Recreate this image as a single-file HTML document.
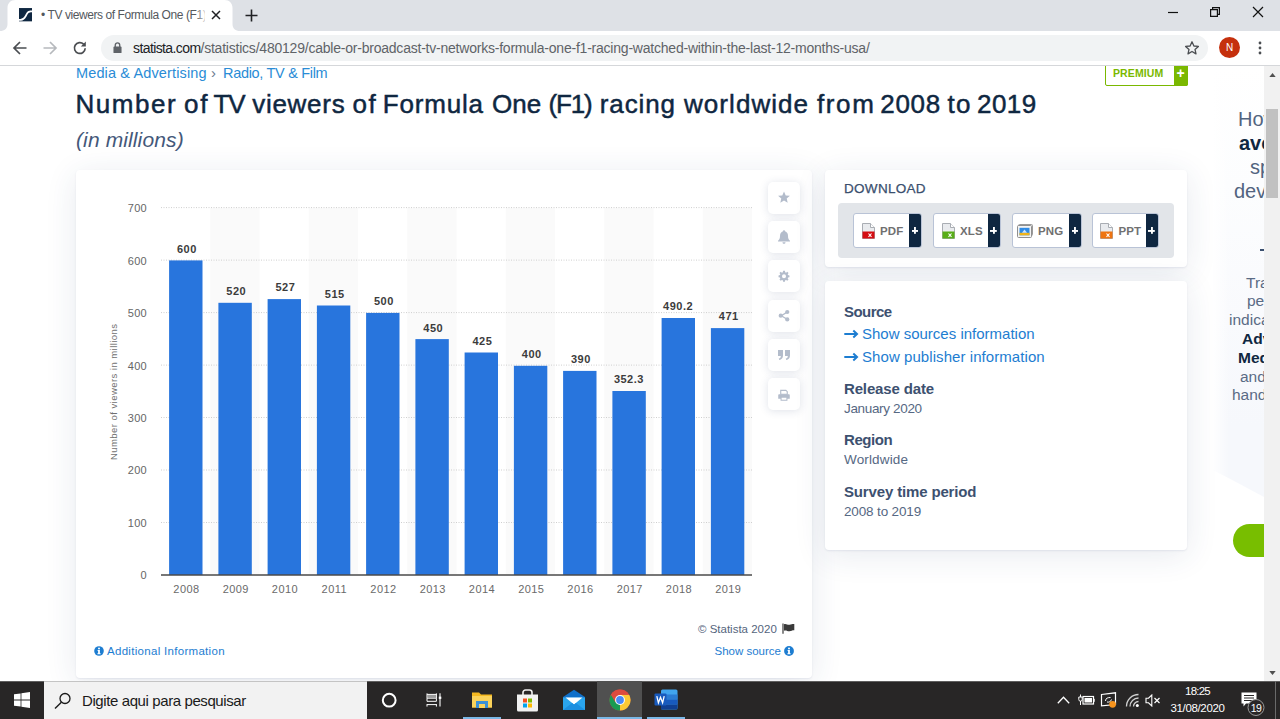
<!DOCTYPE html>
<html>
<head>
<meta charset="utf-8">
<title>TV viewers of Formula One (F1)</title>
<style>
*{box-sizing:border-box;margin:0;padding:0}
html,body{width:1280px;height:719px;overflow:hidden;background:#fff;font-family:"Liberation Sans",sans-serif;}
.abs{position:absolute}
#root{position:relative;width:1280px;height:719px;overflow:hidden;background:#fff}
/* browser chrome */
#tabstrip{left:0;top:0;width:1280px;height:31px;background:#dee1e6}
#tab{left:8px;top:0;width:224px;height:31px;background:#fff;border-radius:8px 8px 0 0}
#tabtitle{left:41px;top:8px;font-size:12px;color:#54585d;white-space:nowrap;letter-spacing:-0.42px;width:164px;overflow:hidden}
#toolbar{left:0;top:31px;width:1280px;height:34px;background:#fff}
#tbline{left:0;top:65px;width:1280px;height:1px;background:#d5d7da}
#omni{left:101px;top:35px;width:1107px;height:26px;border-radius:13px;background:#f1f3f4}
#url{left:133px;top:40px;font-size:14px;color:#5f6368;white-space:nowrap;letter-spacing:-0.22px}
#url b{font-weight:normal;color:#202124;letter-spacing:-0.6px}
/* page */
#page{left:0;top:0;width:1264px;height:681px;background:#fff;overflow:hidden}
.card{background:#fff;border-radius:4px;box-shadow:0 5px 32px rgba(40,60,110,0.11),0 1px 2px rgba(40,60,110,0.09)}
.sbtn{left:768px;width:32px;height:32px;background:#fff;border-radius:5px;box-shadow:0 1px 9px rgba(40,60,110,0.15)}
.dlb{top:213px;height:35px;background:#fff;border:1px solid #b9c3d6;border-radius:3px;overflow:hidden}
.dlb span{position:absolute;top:11px;font-size:11.5px;font-weight:bold;color:#707070;letter-spacing:0.1px}
.dlb i{position:absolute;right:-1px;top:-1px;width:13px;height:35px;background:#0f2741;border-radius:0 3px 3px 0}
.dlb b{position:absolute;right:2.6px;top:13.2px;width:6.6px;height:6.6px;font-size:0;background:linear-gradient(#fff,#fff) center/100% 1.9px no-repeat,linear-gradient(#fff,#fff) center/1.9px 100% no-repeat}
.lbl{left:844px;font-size:15px;font-weight:bold;color:#3d5170;white-space:nowrap;letter-spacing:-0.15px}
.lnk{left:862px;font-size:15px;color:#1d7dd1;white-space:nowrap}
.val{left:844px;font-size:13.5px;color:#566883;white-space:nowrap}
.sbig{font-size:20px;color:#52647f;white-space:nowrap}
.ssm{font-size:15.5px;color:#5a6b85;white-space:nowrap}
#h1 span{position:absolute;top:0}
/* taskbar */
#taskbar{left:0;top:681px;width:1280px;height:38px;background:#282626}
#search{left:44px;top:681px;width:323px;height:38px;background:#f2f2f2}
#searchtxt{left:82px;top:692px;font-size:15px;color:#1a1a1a;white-space:nowrap;letter-spacing:-0.4px}
</style>
</head>
<body>
<div id="root">

<!-- ===== PAGE ===== -->
<div id="page" class="abs">

<!-- breadcrumb -->
<div class="abs" id="bc1" style="left:76px;top:65px;font-size:14.5px;color:#2a8cd6;white-space:nowrap;letter-spacing:0.13px">Media &amp; Advertising</div>
<div class="abs" style="left:211px;top:64px;font-size:15px;color:#6a7a8f">›</div>
<div class="abs" id="bc2" style="left:223px;top:65px;font-size:14.5px;color:#2a8cd6;white-space:nowrap;letter-spacing:-0.31px">Radio, TV &amp; Film</div>
<!-- premium badge -->
<div class="abs" style="left:1105px;top:60px;width:83px;height:26px;background:#fff;border:1px solid #7ab800;border-radius:2px"></div>
<div class="abs" style="left:1113px;top:67px;font-size:10.5px;font-weight:bold;color:#7ab800;letter-spacing:0.1px">PREMIUM</div>
<div class="abs" style="left:1174px;top:60px;width:14px;height:26px;background:#7ab800;border-radius:0 2px 2px 0"></div>
<div class="abs" style="left:1176.5px;top:65px;font-size:14px;font-weight:bold;color:#fff;line-height:16px">+</div>
<!-- title -->
<div class="abs" id="h1" style="left:0;top:88.5px;width:1100px;height:32px;font-size:26px;color:#0f2741;white-space:nowrap;-webkit-text-stroke:0.48px #0f2741"><span style="left:75.4px;letter-spacing:1.56px">Number</span><span style="left:184.1px;letter-spacing:1.60px">of</span><span style="left:213.5px;letter-spacing:-1.20px">TV</span><span style="left:252.2px;letter-spacing:0.72px">viewers</span><span style="left:352.4px;letter-spacing:1.60px">of</span><span style="left:382.8px;letter-spacing:0.82px">Formula</span><span style="left:492.0px;letter-spacing:0.00px">One</span><span style="left:548.5px;letter-spacing:-1.20px">(F1)</span><span style="left:599.8px;letter-spacing:0.88px">racing</span><span style="left:684.0px;letter-spacing:1.06px">worldwide</span><span style="left:817.0px;letter-spacing:1.60px">from</span><span style="left:880.3px;letter-spacing:0.67px">2008</span><span style="left:947.4px;letter-spacing:1.50px">to</span><span style="left:977.0px;letter-spacing:0.43px">2019</span></div>
<div class="abs" id="h2" style="left:76px;top:127.5px;font-size:21px;font-style:italic;color:#44587a;white-space:nowrap;letter-spacing:0.12px">(in millions)</div>

<!-- chart card -->
<div class="abs card" style="left:76px;top:170px;width:736px;height:508px"></div>
<svg class="abs" style="left:0;top:0" width="1264" height="681" viewBox="0 0 1264 681" font-family="Liberation Sans, sans-serif">
<rect x="210.25" y="207.6" width="49.25" height="366.4" fill="#fafafa"/>
<rect x="308.75" y="207.6" width="49.25" height="366.4" fill="#fafafa"/>
<rect x="407.25" y="207.6" width="49.25" height="366.4" fill="#fafafa"/>
<rect x="505.75" y="207.6" width="49.25" height="366.4" fill="#fafafa"/>
<rect x="604.25" y="207.6" width="49.25" height="366.4" fill="#fafafa"/>
<rect x="702.75" y="207.6" width="49.25" height="366.4" fill="#fafafa"/>
<path d="M161.0 522.5 H752.0" stroke="#cfcfcf" stroke-width="1" stroke-dasharray="1,1.5"/>
<path d="M161.0 470.0 H752.0" stroke="#cfcfcf" stroke-width="1" stroke-dasharray="1,1.5"/>
<path d="M161.0 417.5 H752.0" stroke="#cfcfcf" stroke-width="1" stroke-dasharray="1,1.5"/>
<path d="M161.0 365.1 H752.0" stroke="#cfcfcf" stroke-width="1" stroke-dasharray="1,1.5"/>
<path d="M161.0 312.6 H752.0" stroke="#cfcfcf" stroke-width="1" stroke-dasharray="1,1.5"/>
<path d="M161.0 260.1 H752.0" stroke="#cfcfcf" stroke-width="1" stroke-dasharray="1,1.5"/>
<path d="M161.0 207.6 H752.0" stroke="#cfcfcf" stroke-width="1" stroke-dasharray="1,1.5"/>
<rect x="169.1" y="260.4" width="33.4" height="314.6" fill="#2875dd"/>
<text x="186.9" y="252.7" font-size="11" font-weight="bold" fill="#3c3c3c" text-anchor="middle" letter-spacing="0.5">600</text>
<text x="186.5" y="593.2" font-size="11" fill="#6a6a6a" text-anchor="middle" letter-spacing="0.45">2008</text>
<rect x="218.4" y="302.8" width="33.4" height="272.2" fill="#2875dd"/>
<text x="236.2" y="295.1" font-size="11" font-weight="bold" fill="#3c3c3c" text-anchor="middle" letter-spacing="0.5">520</text>
<text x="235.8" y="593.2" font-size="11" fill="#6a6a6a" text-anchor="middle" letter-spacing="0.45">2009</text>
<rect x="267.6" y="299.1" width="33.4" height="275.9" fill="#2875dd"/>
<text x="285.4" y="291.4" font-size="11" font-weight="bold" fill="#3c3c3c" text-anchor="middle" letter-spacing="0.5">527</text>
<text x="285.0" y="593.2" font-size="11" fill="#6a6a6a" text-anchor="middle" letter-spacing="0.45">2010</text>
<rect x="316.9" y="305.5" width="33.4" height="269.5" fill="#2875dd"/>
<text x="334.7" y="297.8" font-size="11" font-weight="bold" fill="#3c3c3c" text-anchor="middle" letter-spacing="0.5">515</text>
<text x="334.3" y="593.2" font-size="11" fill="#6a6a6a" text-anchor="middle" letter-spacing="0.45">2011</text>
<rect x="366.1" y="312.9" width="33.4" height="262.1" fill="#2875dd"/>
<text x="383.9" y="305.2" font-size="11" font-weight="bold" fill="#3c3c3c" text-anchor="middle" letter-spacing="0.5">500</text>
<text x="383.5" y="593.2" font-size="11" fill="#6a6a6a" text-anchor="middle" letter-spacing="0.45">2012</text>
<rect x="415.4" y="339.1" width="33.4" height="235.9" fill="#2875dd"/>
<text x="433.2" y="332.3" font-size="11" font-weight="bold" fill="#3c3c3c" text-anchor="middle" letter-spacing="0.5">450</text>
<text x="432.8" y="593.2" font-size="11" fill="#6a6a6a" text-anchor="middle" letter-spacing="0.45">2013</text>
<rect x="464.6" y="352.5" width="33.4" height="222.5" fill="#2875dd"/>
<text x="482.4" y="344.5" font-size="11" font-weight="bold" fill="#3c3c3c" text-anchor="middle" letter-spacing="0.5">425</text>
<text x="482.0" y="593.2" font-size="11" fill="#6a6a6a" text-anchor="middle" letter-spacing="0.45">2014</text>
<rect x="513.9" y="365.8" width="33.4" height="209.2" fill="#2875dd"/>
<text x="531.7" y="357.6" font-size="11" font-weight="bold" fill="#3c3c3c" text-anchor="middle" letter-spacing="0.5">400</text>
<text x="531.3" y="593.2" font-size="11" fill="#6a6a6a" text-anchor="middle" letter-spacing="0.45">2015</text>
<rect x="563.1" y="370.9" width="33.4" height="204.1" fill="#2875dd"/>
<text x="580.9" y="363.2" font-size="11" font-weight="bold" fill="#3c3c3c" text-anchor="middle" letter-spacing="0.5">390</text>
<text x="580.5" y="593.2" font-size="11" fill="#6a6a6a" text-anchor="middle" letter-spacing="0.45">2016</text>
<rect x="612.4" y="391.0" width="33.4" height="184.0" fill="#2875dd"/>
<text x="628.9" y="383.3" font-size="11" font-weight="bold" fill="#3c3c3c" text-anchor="middle" letter-spacing="0.5">352.3</text>
<text x="629.8" y="593.2" font-size="11" fill="#6a6a6a" text-anchor="middle" letter-spacing="0.45">2017</text>
<rect x="661.6" y="318.0" width="33.4" height="257.0" fill="#2875dd"/>
<text x="678.1" y="310.3" font-size="11" font-weight="bold" fill="#3c3c3c" text-anchor="middle" letter-spacing="0.5">490.2</text>
<text x="679.0" y="593.2" font-size="11" fill="#6a6a6a" text-anchor="middle" letter-spacing="0.45">2018</text>
<rect x="710.9" y="328.1" width="33.4" height="246.9" fill="#2875dd"/>
<text x="728.7" y="320.4" font-size="11" font-weight="bold" fill="#3c3c3c" text-anchor="middle" letter-spacing="0.5">471</text>
<text x="728.3" y="593.2" font-size="11" fill="#6a6a6a" text-anchor="middle" letter-spacing="0.45">2019</text>
<path d="M161.0 575.0 H752.0" stroke="#4a4a4a" stroke-width="1.6"/>
<text x="147" y="579.4" font-size="11" fill="#666" text-anchor="end" letter-spacing="0.3">0</text>
<text x="147" y="526.9" font-size="11" fill="#666" text-anchor="end" letter-spacing="0.3">100</text>
<text x="147" y="474.4" font-size="11" fill="#666" text-anchor="end" letter-spacing="0.3">200</text>
<text x="147" y="421.9" font-size="11" fill="#666" text-anchor="end" letter-spacing="0.3">300</text>
<text x="147" y="369.5" font-size="11" fill="#666" text-anchor="end" letter-spacing="0.3">400</text>
<text x="147" y="317.0" font-size="11" fill="#666" text-anchor="end" letter-spacing="0.3">500</text>
<text x="147" y="264.5" font-size="11" fill="#666" text-anchor="end" letter-spacing="0.3">600</text>
<text x="147" y="212.0" font-size="11" fill="#666" text-anchor="end" letter-spacing="0.3">700</text>
<text transform="translate(116.9,391.8) rotate(-90)" font-size="9.5" fill="#707070" text-anchor="middle" letter-spacing="0.45">Number of viewers in millions</text>
</svg>
<!-- side buttons -->
<div class="abs sbtn" style="top:182px"></div>
<svg class="abs" style="left:776px;top:189px" width="16" height="16" viewBox="0 0 16 16"><g transform="translate(0.80,1.10) scale(0.9)"><path d="M8 1.5 L9.9 5.9 L14.6 6.3 L11 9.4 L12.1 14 L8 11.5 L3.9 14 L5 9.4 L1.4 6.3 L6.1 5.9 Z" fill="#b3bccb"/></g></svg>
<div class="abs sbtn" style="top:221px"></div>
<svg class="abs" style="left:776px;top:229px" width="16" height="16" viewBox="0 0 16 16"><path d="M8 1.2 C8.6 1.2 9 1.6 9 2.2 C11 2.8 12 4.5 12 7 C12 9.5 12.8 10.8 14 11.8 L14 12.5 L2 12.5 L2 11.8 C3.2 10.8 4 9.5 4 7 C4 4.5 5 2.8 7 2.2 C7 1.6 7.4 1.2 8 1.2 Z M6.5 13.2 L9.5 13.2 C9.5 14.1 8.8 14.8 8 14.8 C7.2 14.8 6.5 14.1 6.5 13.2 Z" fill="#b3bccb"/></svg>
<div class="abs sbtn" style="top:260px"></div>
<svg class="abs" style="left:776px;top:268px" width="16" height="16" viewBox="0 0 16 16"><g transform="translate(1.28,1.58) scale(0.84)"><path d="M6.9 1.5 H9.1 L9.4 3.2 L10.5 3.7 L11.9 2.7 L13.4 4.2 L12.4 5.6 L12.8 6.6 L14.5 6.9 V9.1 L12.8 9.4 L12.4 10.5 L13.4 11.9 L11.9 13.4 L10.5 12.4 L9.4 12.8 L9.1 14.5 H6.9 L6.6 12.8 L5.5 12.4 L4.1 13.4 L2.6 11.9 L3.6 10.5 L3.2 9.4 L1.5 9.1 V6.9 L3.2 6.6 L3.6 5.6 L2.6 4.2 L4.1 2.7 L5.5 3.7 L6.6 3.2 Z M8 5.6 A2.4 2.4 0 1 0 8 10.4 A2.4 2.4 0 1 0 8 5.6 Z" fill="#b3bccb" fill-rule="evenodd"/></g></svg>
<div class="abs sbtn" style="top:300px"></div>
<svg class="abs" style="left:776px;top:308px" width="16" height="16" viewBox="0 0 16 16"><g transform="translate(0.96,0.66) scale(0.88)"><path d="M5 8 L11.5 4 M5 8 L11.5 12" stroke="#b3bccb" stroke-width="1.5" fill="none"/><circle cx="4.3" cy="8" r="2.4" fill="#b3bccb"/><circle cx="11.7" cy="3.8" r="2.4" fill="#b3bccb"/><circle cx="11.7" cy="12.2" r="2.4" fill="#b3bccb"/></g></svg>
<div class="abs sbtn" style="top:339px"></div>
<svg class="abs" style="left:776px;top:347px" width="16" height="16" viewBox="0 0 16 16"><path d="M2 3 H7 V8.5 C7 11 5.6 12.6 3.2 13 L2.8 11.6 C4.2 11.2 4.8 10.3 4.8 9 H2 Z M9 3 H14 V8.5 C14 11 12.6 12.6 10.2 13 L9.8 11.6 C11.2 11.2 11.8 10.3 11.8 9 H9 Z" fill="#b3bccb"/></svg>
<div class="abs sbtn" style="top:378px"></div>
<svg class="abs" style="left:776px;top:387.5px" width="16" height="16" viewBox="0 0 16 16"><g transform="translate(1.12,0.62) scale(0.86)"><path d="M4.2 2 H10.2 L11.8 3.6 V6.5 H4.2 Z" fill="none" stroke="#b3bccb" stroke-width="1.3"/><path d="M2.5 6.5 H13.5 C14.2 6.5 14.7 7 14.7 7.7 V11.8 H12 V14 H4 V11.8 H1.3 V7.7 C1.3 7 1.8 6.5 2.5 6.5 Z M5.2 10.6 V12.8 H10.8 V10.6 Z" fill="#b3bccb" fill-rule="evenodd"/></g></svg>
<!-- chart footer -->
<div class="abs" id="addinf" style="left:107px;top:645px;font-size:11.5px;color:#1d7dd1;white-space:nowrap;letter-spacing:0.3px">Additional Information</div>
<svg class="abs" style="left:94px;top:645.9px" width="10" height="10" viewBox="0 0 10 10"><circle cx="5" cy="5" r="4.8" fill="#1d7dd1"/><rect x="4.1" y="1.7" width="1.8" height="1.6" fill="#fff"/><path d="M3.6 4.1 H5.9 V7.3 H6.6 V8.2 H3.4 V7.3 H4.1 V5 H3.6 Z" fill="#fff"/></svg>
<div class="abs" id="cpy" style="left:698px;top:622.5px;font-size:11.5px;color:#55657d;white-space:nowrap">© Statista 2020</div>
<svg class="abs" style="left:782px;top:623px" width="13" height="11" viewBox="0 0 13 11"><path d="M1 0.5 V10.8" stroke="#3a3a3a" stroke-width="1.2"/><path d="M2 1.3 C4 0.3 5.5 2.2 7.5 1.8 C9.5 1.4 10.5 0.8 12.3 1 V7.3 C10.5 7.1 9.5 8 7.5 8.2 C5.5 8.4 4 6.8 2 7.8 Z" fill="#3a3a3a"/></svg>
<div class="abs" id="shsrc" style="left:714.5px;top:645.4px;font-size:11.5px;color:#1d7dd1;white-space:nowrap">Show source</div>
<svg class="abs" style="left:784.2px;top:646px" width="10" height="10" viewBox="0 0 10 10"><circle cx="5" cy="5" r="4.9" fill="#1d7dd1"/><rect x="4.1" y="1.7" width="1.8" height="1.6" fill="#fff"/><path d="M3.6 4.1 H5.9 V7.3 H6.6 V8.2 H3.4 V7.3 H4.1 V5 H3.6 Z" fill="#fff"/></svg>

<!-- download card -->
<div class="abs card" style="left:825px;top:170px;width:362px;height:97px"></div>
<div class="abs" style="left:844px;top:181px;font-size:13.5px;color:#3a4f6e;letter-spacing:0.3px;white-space:nowrap;-webkit-text-stroke:0.25px #3a4f6e">DOWNLOAD</div>
<div class="abs" style="left:838px;top:203px;width:336px;height:55px;background:#e2e5e9;border-radius:4px"></div>
<!-- dl buttons -->
<div class="abs dlb" style="left:853px;width:69px"><span style="left:26px">PDF</span><i></i><b>+</b></div>
<div class="abs dlb" style="left:933px;width:67.6px"><span style="left:26px">XLS</span><i></i><b>+</b></div>
<div class="abs dlb" style="left:1012px;width:70px"><span style="left:25px">PNG</span><i></i><b>+</b></div>
<div class="abs dlb" style="left:1091.5px;width:67px"><span style="left:26px">PPT</span><i></i><b>+</b></div>
<svg class="abs" style="left:862px;top:223px" width="13" height="16" viewBox="0 0 13 16"><path d="M0.5 0.5 H8.5 L12.5 4.5 V15.5 H0.5 Z" fill="#e9ebee" stroke="#a9adb3" stroke-width="1"/><path d="M8.5 0.5 V4.5 H12.5" fill="#fff" stroke="#a9adb3" stroke-width="1"/><rect x="0.5" y="8.5" width="12" height="7" fill="#d40d12"/><path d="M6.5 13.8 L9.5 10.5 M6.5 10.5 L9.5 13.8" stroke="#fff" stroke-width="1.1"/></svg>
<svg class="abs" style="left:942px;top:223px" width="13" height="16" viewBox="0 0 13 16"><path d="M0.5 0.5 H8.5 L12.5 4.5 V15.5 H0.5 Z" fill="#e9ebee" stroke="#a9adb3" stroke-width="1"/><path d="M8.5 0.5 V4.5 H12.5" fill="#fff" stroke="#a9adb3" stroke-width="1"/><rect x="0.5" y="8.5" width="12" height="7" fill="#58ad17"/><path d="M6.5 13.8 L9.5 10.5 M6.5 10.5 L9.5 13.8" stroke="#fff" stroke-width="1.1"/></svg>
<svg class="abs" style="left:1017px;top:224px" width="16" height="14" viewBox="0 0 16 14"><rect x="1.5" y="0.5" width="14" height="11" rx="1" fill="#ededed" stroke="#9a9a9a"/><rect x="0.5" y="1.5" width="14" height="12" rx="1" fill="#f4f4f4" stroke="#8f8f8f"/><rect x="2.5" y="3.8" width="10" height="7.5" fill="#2f8be6"/><rect x="2.5" y="8.8" width="10" height="2.5" fill="#f0b41a"/><path d="M5 8.8 L7.5 5.5 L10 8.8 Z" fill="#cfe5fb"/></svg>
<svg class="abs" style="left:1100px;top:223px" width="13" height="16" viewBox="0 0 13 16"><path d="M0.5 0.5 H8.5 L12.5 4.5 V15.5 H0.5 Z" fill="#e9ebee" stroke="#a9adb3" stroke-width="1"/><path d="M8.5 0.5 V4.5 H12.5" fill="#fff" stroke="#a9adb3" stroke-width="1"/><rect x="0.5" y="8.5" width="12" height="7" fill="#ee7411"/><path d="M6.5 13.8 L9.5 10.5 M6.5 10.5 L9.5 13.8" stroke="#fff" stroke-width="1.1"/></svg>
<!-- source card -->
<div class="abs card" style="left:825px;top:281px;width:362px;height:269px"></div>
<div class="abs lbl" style="top:303px;letter-spacing:-0.55px">Source</div>
<div class="abs lnk" style="top:325px">Show sources information</div>
<div class="abs lnk" style="top:348px;letter-spacing:0.07px">Show publisher information</div>
<svg class="abs" style="left:844px;top:329px" width="15" height="10" viewBox="0 0 15 10"><path d="M0.3 5 H12 M9.3 1.6 L13 5 L9.3 8.4" stroke="#1d7dd1" stroke-width="2" fill="none"/></svg>
<svg class="abs" style="left:844px;top:352px" width="15" height="10" viewBox="0 0 15 10"><path d="M0.3 5 H12 M9.3 1.6 L13 5 L9.3 8.4" stroke="#1d7dd1" stroke-width="2" fill="none"/></svg>
<div class="abs lbl" style="top:380px">Release date</div>
<div class="abs val" style="top:401px;letter-spacing:-0.34px">January 2020</div>
<div class="abs lbl" style="top:431px;letter-spacing:-0.45px">Region</div>
<div class="abs val" style="top:452px;letter-spacing:0.15px">Worldwide</div>
<div class="abs lbl" style="top:483px">Survey time period</div>
<div class="abs val" style="top:504px;letter-spacing:-0.15px">2008 to 2019</div>
<!-- sidebar -->

<div class="abs" style="left:1213px;top:66px;width:51px;height:431px;background:linear-gradient(90deg,rgba(255,255,255,0.9) 0,rgba(255,255,255,0) 16px),linear-gradient(180deg,#fff 0,#fcfdfe 120px,#f9fafd 250px,#f6f8fc 360px,#f6f8fc 431px);clip-path:polygon(0 0,100% 0,100% 100%,0 93.7%)"></div>
<div class="abs sbig" style="left:1238px;top:108px">How</div>
<div class="abs sbig" style="left:1239px;top:132px;font-weight:bold;color:#0f2741">ave</div>
<div class="abs sbig" style="left:1250px;top:156px">sp</div>
<div class="abs sbig" style="left:1234px;top:180px">dev</div>
<div class="abs" style="left:1260px;top:249px;width:4px;height:1.5px;background:#3a4f6e"></div>
<div class="abs ssm" style="left:1246px;top:274px">Tra</div>
<div class="abs ssm" style="left:1247px;top:292px">pe</div>
<div class="abs ssm" style="left:1229px;top:311px">indica</div>
<div class="abs ssm" style="left:1242px;top:330px;font-weight:bold;color:#0f2741">Adv</div>
<div class="abs ssm" style="left:1238px;top:349px;font-weight:bold;color:#0f2741">Med</div>
<div class="abs ssm" style="left:1240px;top:368px">and</div>
<div class="abs ssm" style="left:1232px;top:386px">hand</div>
<div class="abs" style="left:1233px;top:524px;width:60px;height:33px;border-radius:17px;background:#78be00"></div>



</div>

<!-- ===== TAB STRIP ===== -->
<div id="tabstrip" class="abs"></div>
<svg class="abs" style="left:0;top:0" width="248" height="31" viewBox="0 0 248 31"><path d="M0 31 C4.500 31 7.500 28.500 7.500 24 V8 C7.500 3.500 10.500 0 15.500 0 H224.500 C229.500 0 232.500 3.500 232.500 8 V24 C232.500 28.500 235.500 31 240 31 Z" fill="#fff"/></svg>
<svg class="abs" style="left:18.700px;top:8.200px" width="13.300" height="13.400" viewBox="0 0 14 14"><rect width="14" height="14" fill="#0f2741"/><path d="M0 11.5 C5 11.5 5.5 9 7 6.5 C8.5 4 9 2.5 14 2.5 L14 4.5 C10 4.5 9.8 5.5 8.4 7.8 C7 10.2 6 13.5 0 13.5 Z" fill="#fff"/></svg>
<div id="tabtitle" class="abs">• TV viewers of Formula One (F1) r</div>
<div class="abs" style="left:196px;top:6px;width:12px;height:18px;background:linear-gradient(90deg,rgba(255,255,255,0),#fff)"></div>
<svg class="abs" style="left:211px;top:10px" width="10" height="10" viewBox="0 0 10 10"><path d="M1 1 L9 9 M9 1 L1 9" stroke="#202124" stroke-width="1.5" fill="none"/></svg>
<svg class="abs" style="left:245px;top:9px" width="13" height="13" viewBox="0 0 13 13"><path d="M6.5 0.5 V12.5 M0.5 6.5 H12.5" stroke="#202124" stroke-width="1.6" fill="none"/></svg>
<!-- window controls -->
<svg class="abs" style="left:1167px;top:6px" width="12" height="12" viewBox="0 0 12 12"><path d="M1 6.5 H11" stroke="#111" stroke-width="1.2"/></svg>
<svg class="abs" style="left:1209px;top:6px" width="12" height="12" viewBox="0 0 12 12"><path d="M1.6 3.6 H8.4 V10.4 H1.6 Z M3.6 3.4 V1.6 H10.4 V8.4 H8.6" stroke="#111" stroke-width="1.2" fill="none"/></svg>
<svg class="abs" style="left:1252px;top:6px" width="12" height="12" viewBox="0 0 12 12"><path d="M1 1 L11 11 M11 1 L1 11" stroke="#111" stroke-width="1.2" fill="none"/></svg>

<!-- ===== TOOLBAR ===== -->
<div id="toolbar" class="abs"></div>
<div id="tbline" class="abs"></div>
<svg class="abs" style="left:12px;top:40px" width="16" height="16" viewBox="0 0 16 16"><path d="M14.5 8 H2.5 M8 2 L2 8 L8 14" stroke="#4a4d51" stroke-width="1.7" fill="none"/></svg>
<svg class="abs" style="left:42px;top:40px" width="16" height="16" viewBox="0 0 16 16"><path d="M1.5 8 H13.5 M8 2 L14 8 L8 14" stroke="#b6b9bd" stroke-width="1.7" fill="none"/></svg>
<svg class="abs" style="left:72px;top:40px" width="16" height="16" viewBox="0 0 16 16"><path d="M13.2 8.3 A5.4 5.4 0 1 1 11.6 4.2" stroke="#4a4d51" stroke-width="1.7" fill="none"/><path d="M13.8 1.6 V6.6 H8.8 Z" fill="#4a4d51"/></svg>
<div id="omni" class="abs"></div>
<svg class="abs" style="left:113.200px;top:41.600px" width="9" height="11.700" viewBox="0 0 10 13"><rect x="0.5" y="5" width="9" height="7.5" rx="1" fill="#5f6368"/><path d="M2.5 5.5 V3.5 A2.5 2.5 0 0 1 7.5 3.5 V5.5" stroke="#5f6368" stroke-width="1.5" fill="none"/></svg>
<div id="url" class="abs"><b>statista.com</b>/statistics/480129/cable-or-broadcast-tv-networks-formula-one-f1-racing-watched-within-the-last-12-months-usa/</div>
<svg class="abs" style="left:1184px;top:40px" width="16" height="16" viewBox="0 0 16 16"><path d="M8 1.8 L9.9 6 L14.4 6.4 L11 9.4 L12 13.9 L8 11.5 L4 13.9 L5 9.4 L1.6 6.4 L6.1 6 Z" stroke="#4a4d51" stroke-width="1.3" fill="none" stroke-linejoin="round"/></svg>
<div class="abs" style="left:1219px;top:37.2px;width:21px;height:21px;border-radius:50%;background:#c5300d;color:#fff;font-size:10px;text-align:center;line-height:21px">N</div>
<svg class="abs" style="left:1257px;top:40px" width="6" height="16" viewBox="0 0 6 16"><circle cx="3" cy="3" r="1.4" fill="#4a4d51"/><circle cx="3" cy="8" r="1.4" fill="#4a4d51"/><circle cx="3" cy="13" r="1.4" fill="#4a4d51"/></svg>


<!-- ===== SCROLLBAR ===== -->
<div class="abs" style="left:1264px;top:66px;width:16px;height:615px;background:#f1f1f1"></div>
<div class="abs" style="left:1266px;top:109px;width:12px;height:89px;background:#c1c1c1"></div>
<svg class="abs" style="left:1268.5px;top:72.5px" width="7" height="4" viewBox="0 0 8 5"><path d="M0 5 L4 0 L8 5 Z" fill="#505050"/></svg>
<svg class="abs" style="left:1268.5px;top:671px" width="7" height="4" viewBox="0 0 8 5"><path d="M0 0 L4 5 L8 0 Z" fill="#505050"/></svg>

<!-- ===== TASKBAR ===== -->
<div id="taskbar" class="abs"></div>
<div id="search" class="abs"></div>
<div id="searchtxt" class="abs">Digite aqui para pesquisar</div>

<div id="tbedge" class="abs" style="left:0;top:681px;width:1280px;height:1px;background:rgba(150,150,150,0.5)"></div>
<!-- windows logo -->
<svg class="abs" style="left:14px;top:692px" width="16" height="16" viewBox="0 0 16 16"><path d="M0 2.3 L6.6 1.4 V7.6 H0 Z M7.4 1.3 L16 0 V7.6 H7.4 Z M0 8.4 H6.6 V14.6 L0 13.7 Z M7.4 8.4 H16 V16 L7.4 14.7 Z" fill="#fff"/></svg>
<!-- search icon -->
<svg class="abs" style="left:54px;top:692px" width="18" height="18" viewBox="0 0 18 18"><circle cx="11" cy="6.5" r="5" stroke="#1a1a1a" stroke-width="1.3" fill="none"/><path d="M7.4 10.2 L1 16.6" stroke="#1a1a1a" stroke-width="1.4"/></svg>
<!-- cortana -->
<svg class="abs" style="left:380px;top:691px" width="18" height="18" viewBox="0 0 18 18"><circle cx="9.2" cy="9.2" r="6.4" stroke="#fff" stroke-width="2" fill="none"/></svg>
<!-- task view -->
<svg class="abs" style="left:425px;top:691px" width="18" height="18" viewBox="0 0 18 18"><rect x="2.500" y="3.900" width="8.400" height="2.800" fill="#9a9a9a"/><path d="M2 2.400 V7.200 M11.400 2.400 V7.200 M2 3.400 H11.400 M2 7.200 H11.400 M2 10.300 H11.400 M2 7.200 V10.300 M11.400 7.200 V10.300 M2 13.600 H11.400 M2 13.100 V15.600 M11.400 13.100 V15.600" stroke="#fff" stroke-width="1" fill="none"/><path d="M15 2.300 V15.600" stroke="#fff" stroke-width="1.100"/><rect x="13.800" y="5.600" width="2.500" height="2.300" fill="#fff"/></svg>
<!-- explorer -->
<svg class="abs" style="left:471px;top:690px" width="22" height="20" viewBox="0 0 22 20"><path d="M1 2.5 H8 L10 4.5 H21 V17.5 H1 Z" fill="#f5b921"/><path d="M1 6 H21 V17.5 H1 Z" fill="#fbd35b"/><path d="M5 11 H17 V18 H5 Z" fill="#3b91d7"/><path d="M8 14 H14 V18 H8 Z" fill="#fbd35b"/></svg>
<div class="abs" style="left:463px;top:717px;width:38px;height:2px;background:#7ab7e6"></div>
<!-- store -->
<svg class="abs" style="left:516px;top:688px" width="23" height="24" viewBox="0 0 23 24"><path d="M7 7 V4.5 A2.5 2.5 0 0 1 9.5 2 H13.5 A2.5 2.5 0 0 1 16 4.5 V7" stroke="#f2f2f2" stroke-width="1.6" fill="none"/><path d="M1 6.5 H22 V22 A1.5 1.5 0 0 1 20.500 23.500 H2.500 A1.5 1.500 0 0 1 1 22 Z" fill="#f2f2f2"/><rect x="7" y="10.500" width="4" height="4" fill="#f25022"/><rect x="12" y="10.500" width="4" height="4" fill="#7fba00"/><rect x="7" y="15.500" width="4" height="4" fill="#00a4ef"/><rect x="12" y="15.500" width="4" height="4" fill="#ffb900"/></svg>
<!-- mail -->
<svg class="abs" style="left:562px;top:689px" width="24" height="22" viewBox="0 0 24 22"><path d="M1 8 L12 0.800 L23 8 V21 H1 Z" fill="#1170c9"/><path d="M1 8.500 H23 V21 H1 Z" fill="#2aa5ee"/><path d="M3.500 8.500 H20.500 L12 15.500 Z" fill="#fff"/><path d="M1 21 L10 14 L12 15.500 L14 14 L23 21 Z" fill="#1b8fe0"/></svg>
<!-- chrome -->
<div class="abs" style="left:597px;top:681px;width:45px;height:38px;background:#505050"></div>
<div class="abs" style="left:597px;top:717px;width:45px;height:2px;background:#7ab7e6"></div>
<svg class="abs" style="left:609px;top:689px" width="22" height="22" viewBox="0 0 22 22"><circle cx="11" cy="11" r="10.500" fill="#dd4b3e"/><path d="M11 11 L1.900 5.750 A10.500 10.500 0 0 0 11 21.500 L15.500 13.600 Z" fill="#1a9b52"/><path d="M11 11 L11 21.500 A10.500 10.500 0 0 0 20.100 5.750 L11 5.750 Z" fill="#fcc934"/><path d="M11 5.750 H20.100 A10.500 10.500 0 0 0 1.900 5.750 L6.500 13.600 Z" fill="#dd4b3e"/><circle cx="11" cy="11" r="4.900" fill="#fff"/><circle cx="11" cy="11" r="3.900" fill="#4a8af4"/></svg>
<!-- word -->
<svg class="abs" style="left:654px;top:689px" width="24" height="21" viewBox="0 0 24 21"><rect x="7" y="0.500" width="16.500" height="20" rx="1.500" fill="#41a5ee"/><rect x="7" y="5.500" width="16.500" height="5" fill="#2b7cd3"/><rect x="7" y="10.500" width="16.500" height="5" fill="#185abd"/><path d="M7 15.500 H23.500 V19 A1.500 1.500 0 0 1 22 20.500 H7 Z" fill="#103f91"/><rect x="0.500" y="4.500" width="12" height="12" rx="1" fill="#185abd"/><path d="M2.800 7.200 L4.400 13.800 L6.500 8.300 L8.600 13.800 L10.200 7.200" stroke="#fff" stroke-width="1.300" fill="none"/></svg>
<div class="abs" style="left:647px;top:717px;width:38px;height:2px;background:#7ab7e6"></div>
<!-- tray -->
<svg class="abs" style="left:1057px;top:696px" width="13" height="8" viewBox="0 0 13 8"><path d="M0.800 7.200 L6.500 1.200 L12.200 7.200" stroke="#fff" stroke-width="1.300" fill="none"/></svg>
<svg class="abs" style="left:1078px;top:694px" width="17" height="12" viewBox="0 0 17 12"><rect x="5" y="2.500" width="10.500" height="7.500" fill="none" stroke="#fff" stroke-width="1.200"/><rect x="15.500" y="4.800" width="1.200" height="3" fill="#fff"/><rect x="6.500" y="4" width="7.500" height="4.500" fill="#fff"/><path d="M2.500 0.500 V3 M0.800 3 H4.200 V5.500 A1.700 1.700 0 0 1 0.800 5.500 Z M2.500 7 V11" stroke="#fff" stroke-width="1" fill="#282626"/></svg>
<svg class="abs" style="left:1100px;top:691px" width="18" height="18" viewBox="0 0 18 18"><path d="M1.500 3.500 L15.500 1.800 V13.500 L1.500 14.800 Z" stroke="#fff" stroke-width="1.200" fill="none"/><path d="M5.500 10 C5.500 7 8 6.500 10.500 6.500 M11.500 8.500 C11 10.500 9 11.500 7 11" stroke="#fff" stroke-width="1" fill="none"/><circle cx="12.600" cy="13.300" r="3.400" fill="#f7941d"/></svg>
<svg class="abs" style="left:1125px;top:693px" width="15" height="15" viewBox="0 0 15 15"><path d="M1.500 13.500 A12 12 0 0 1 13.500 1.500" stroke="#cfcfcf" stroke-width="1.300" fill="none"/><path d="M5 13.500 A8.500 8.500 0 0 1 13.500 5" stroke="#cfcfcf" stroke-width="1.300" fill="none"/><path d="M8.500 13.500 A5 5 0 0 1 13.500 8.500" stroke="#cfcfcf" stroke-width="1.300" fill="none"/><circle cx="12.300" cy="12.500" r="1.500" fill="#fff"/></svg>
<svg class="abs" style="left:1145px;top:694px" width="16" height="13" viewBox="0 0 16 13"><path d="M1 4.200 H3.500 L6.800 1 V12 L3.500 8.800 H1 Z" stroke="#fff" stroke-width="1.100" fill="none"/><path d="M9.500 4 L14.500 9 M14.500 4 L9.500 9" stroke="#fff" stroke-width="1.200"/></svg>
<div class="abs" style="left:1165px;top:685.4px;width:65px;text-align:center;font-size:11.500px;color:#fff;letter-spacing:-0.750px">18:25</div>
<div class="abs" style="left:1165px;top:702.4px;width:65px;text-align:center;font-size:11.500px;color:#fff;letter-spacing:-0.350px">31/08/2020</div>
<svg class="abs" style="left:1241px;top:692px" width="26" height="25" viewBox="0 0 26 25"><path d="M0.500 0.500 H15.500 V11.500 H5 L2.500 14.500 V11.500 H0.500 Z" fill="#fff"/><path d="M3 3.500 H13 M3 6 H13 M3 8.500 H13" stroke="#282626" stroke-width="1"/><circle cx="15" cy="15.500" r="8" fill="#282626" stroke="#9a9a9a" stroke-width="1"/><text x="15" y="19.500" font-size="10.500" fill="#fff" text-anchor="middle" font-family="Liberation Sans, sans-serif" letter-spacing="-0.500">19</text></svg>
<div class="abs" style="left:1275px;top:681px;width:1px;height:38px;background:#6a6a6a"></div>


</div>
</body>
</html>
